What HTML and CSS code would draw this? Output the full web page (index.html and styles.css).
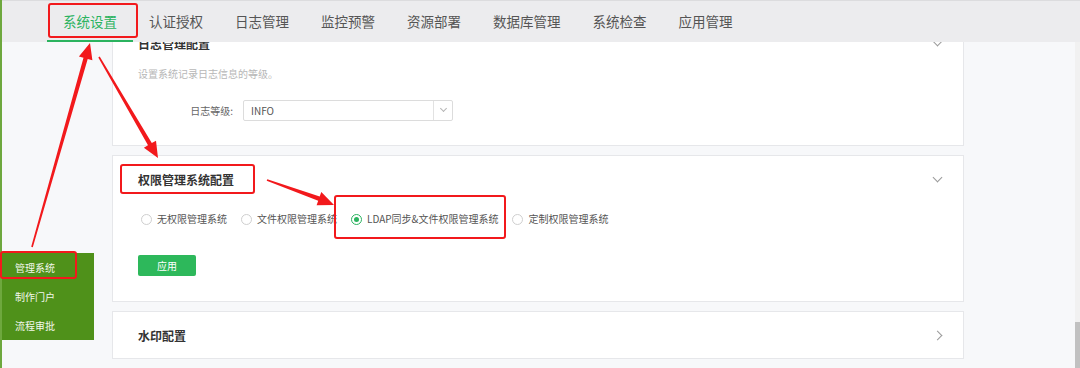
FILE: index.html
```html
<!DOCTYPE html>
<html lang="zh-CN">
<head>
<meta charset="utf-8" />
<title>系统设置</title>
<link rel="stylesheet" href="styles.css">
</head>
<body>
  <div class="app">
    <div class="topnav">
      <a class="tab active">系统设置</a>
      <a class="tab">认证授权</a>
      <a class="tab">日志管理</a>
      <a class="tab">监控预警</a>
      <a class="tab">资源部署</a>
      <a class="tab">数据库管理</a>
      <a class="tab">系统检查</a>
      <a class="tab">应用管理</a>
    </div>

    <div class="main">
      <div class="side">
        <ul class="sidemenu">
          <li>管理系统</li>
          <li>制作门户</li>
          <li>流程审批</li>
        </ul>
      </div>

      <div class="content">
        <div class="card first">
          <div class="card-head">
            <span class="card-title">日志管理配置</span>
            <span class="chev down"></span>
          </div>
          <div class="card-body">
            <p class="desc">设置系统记录日志信息的等级。</p>
            <div class="form-row">
              <label class="form-label">日志等级:</label>
              <div class="select">
                <span class="select-value">INFO</span>
                <span class="select-arrow"><span class="chev down small"></span></span>
              </div>
            </div>
          </div>
        </div>

        <div class="card">
          <div class="card-head">
            <span class="card-title">权限管理系统配置</span>
            <span class="chev down"></span>
          </div>
          <div class="card-body perm">
            <div class="radios">
              <label class="radio"><span class="dot"></span>无权限管理系统</label>
              <label class="radio"><span class="dot"></span>文件权限管理系统</label>
              <label class="radio checked"><span class="dot"></span>LDAP同步&amp;文件权限管理系统</label>
              <label class="radio"><span class="dot"></span>定制权限管理系统</label>
            </div>
            <button class="btn">应用</button>
          </div>
        </div>

        <div class="card">
          <div class="card-head">
            <span class="card-title">水印配置</span>
            <span class="chev right"></span>
          </div>
        </div>

        <div class="card">
          <div class="card-head"></div>
        </div>
      </div>

      <div class="gutter"></div>
      <div class="scrollbar"><div class="thumb"></div></div>
    </div>
  </div>

  <!-- annotation layer: red boxes and arrows drawn over the screenshot -->
  <svg class="marks" width="1080" height="368" viewBox="0 0 1080 368">
    <g fill="none" stroke="#f2191c" stroke-width="2">
      <rect x="49" y="4" width="88" height="33" rx="2" />
      <rect x="121" y="165" width="133" height="28" rx="2" />
      <rect x="335" y="196" width="170" height="42" rx="2" />
      <rect x="1" y="252" width="75" height="26" rx="2" />
    </g>
    <g fill="#f2191c">
      <polygon points="31.2,246.8 83.5,57.8 78.9,56.5 90,43 92.4,60.3 87.7,59 32.8,247.2" />
      <polygon points="98.3,57.4 148,145.3 143.9,147.7 158,158 156,140.7 151.8,143.1 99.7,56.6" />
      <polygon points="266.7,180.8 318.2,200.7 316.6,205.2 334,205 321.3,192 319.7,196.5 267.3,179.3" />
    </g>
  </svg>
</body>
</html>
```

FILE: styles.css
```css
* {
  margin: 0;
  padding: 0;
  box-sizing: border-box;
}

body {
  width: 1080px;
  height: 368px;
  overflow: hidden;
  position: relative;
  font-family: "Noto Sans CJK SC", "Noto Sans", sans-serif;
  color: #333;
  background: #f7f8fa;
}

.app {
  display: flex;
  flex-direction: column;
  height: 368px;
  border-left: 2px solid #6ea83e;
}

/* top tabs */
.topnav {
  display: flex;
  height: 42px;
  padding-left: 45px;
  background: #ececee;
  border-top: 1px solid #dcdcde;
}

.topnav .tab {
  display: flex;
  align-items: center;
  padding: 0 16px;
  font-size: 13.5px;
  color: #555;
  border-bottom: 2px solid transparent;
  white-space: nowrap;
}

.topnav .tab.active {
  color: #2bb35f;
  border-bottom-color: #2bb35f;
}

/* body */
.main {
  display: flex;
  flex: 1;
  overflow: hidden;
}

.side {
  width: 110px;
  flex: none;
  padding-top: 211px;
}

.sidemenu {
  list-style: none;
  width: 92px;
  background: #4f911a;
}

.sidemenu li {
  height: 29px;
  line-height: 29px;
  padding-left: 13px;
  font-size: 10px;
  color: #f2f7ec;
}

.content {
  width: 852px;
  flex: none;
  display: flex;
  flex-direction: column;
  gap: 9px;
}

.card {
  background: #fff;
  border: 1px solid #e6e7ea;
  flex: none;
}

.card.first {
  margin-top: -23px;
}

.card-head {
  height: 46px;
  display: flex;
  align-items: center;
  justify-content: space-between;
  padding: 0 22px 0 25px;
}

.card-title {
  font-size: 12px;
  font-weight: 700;
  color: #333;
}

.card-body {
  padding: 0 25px 24px;
}

.card-body.perm {
  padding-bottom: 25px;
}

.desc {
  font-size: 10px;
  line-height: 14px;
  color: #b7b7b7;
  margin-top: 1px;
}

.form-row {
  display: flex;
  align-items: center;
  margin-top: 19px;
}

.form-label {
  width: 105px;
  text-align: right;
  padding-right: 10px;
  font-size: 10px;
  color: #666;
}

.select {
  display: flex;
  width: 210px;
  height: 21px;
  border: 1px solid #dcdcdc;
  border-radius: 2px;
}

.select-value {
  flex: 1;
  padding-left: 7px;
  font-size: 10px;
  line-height: 19px;
  color: #555;
}

.select-arrow {
  width: 19px;
  border-left: 1px solid #e2e2e2;
  display: flex;
  align-items: center;
  justify-content: center;
}

/* chevrons */
.chev {
  display: block;
  width: 7px;
  height: 7px;
  border-right: 1px solid #9a9a9a;
  border-bottom: 1px solid #9a9a9a;
}

.chev.down {
  transform: translateY(-2px) rotate(45deg);
}

.chev.right {
  transform: rotate(-45deg);
}

.chev.small {
  width: 5px;
  height: 5px;
  border-color: #b5b5b5;
}

/* radios */
.radios {
  display: flex;
  gap: 14px;
  margin-top: 10px;
  padding-left: 3px;
}

.radio {
  display: flex;
  align-items: center;
  font-size: 10px;
  line-height: 14px;
  color: #555;
  white-space: nowrap;
}

.radio .dot {
  width: 11px;
  height: 11px;
  border: 1px solid #cfcfcf;
  border-radius: 50%;
  margin-right: 5px;
  display: flex;
  align-items: center;
  justify-content: center;
}

.radio.checked .dot {
  border-color: #2bb35f;
}

.radio.checked .dot::after {
  content: "";
  width: 5px;
  height: 5px;
  border-radius: 50%;
  background: #2bb35f;
}

.btn {
  display: block;
  margin-top: 29px;
  width: 58px;
  height: 21px;
  border: 0;
  border-radius: 2px;
  background: #2db85b;
  color: #fff;
  font-family: inherit;
  font-size: 10px;
}

.gutter {
  flex: 1;
}

.scrollbar {
  width: 5px;
  flex: none;
  background: #f1f1f1;
  display: flex;
  flex-direction: column;
  justify-content: flex-end;
}

.scrollbar .thumb {
  height: 46px;
  background: #c1c1c1;
}

.marks {
  position: absolute;
  left: 0;
  top: 0;
  pointer-events: none;
}
```
